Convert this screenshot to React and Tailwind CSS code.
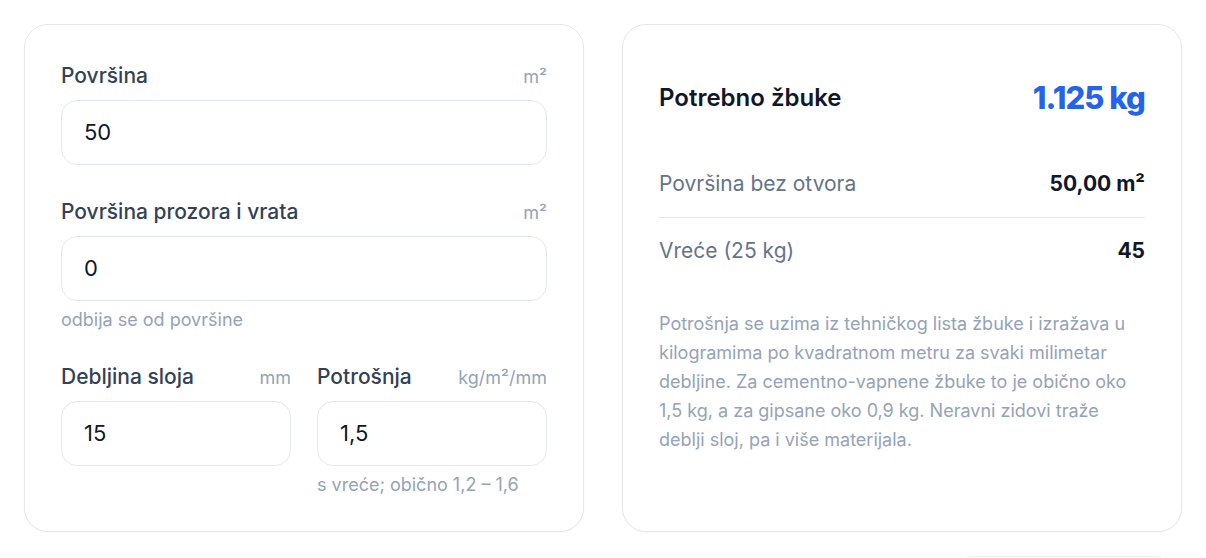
import React from 'react';

const Field = ({ label, unit, value, hint }) => (
  <div className="flex flex-col">
    <div className="flex items-baseline justify-between mb-[9px]">
      <span className="text-[21px] leading-[30px] font-medium text-[#334155]">{label}</span>
      <span className="text-[18px] text-[#94a3b8]">{unit}</span>
    </div>
    <div className="h-[65px] rounded-2xl border border-[#e2e8f0] bg-white flex items-center px-[22px] text-[22px] text-[#0f172a]">
      {value}
    </div>
    {hint && <p className="mt-[9px] text-[18px] leading-5 text-[#94a3b8]">{hint}</p>}
  </div>
);

const Row = ({ label, value, border }) => (
  <div className={`flex items-center justify-between py-[19px] ${border ? 'border-b border-[#e2e8f0]' : ''}`}>
    <span className="text-[21px] leading-7 text-[#64748b]">{label}</span>
    <span className="text-[21px] leading-7 font-bold text-[#0f172a]">{value}</span>
  </div>
);

export default function App() {
  return (
    <div className="min-h-screen bg-white px-6 pt-6 font-['Inter',sans-serif] overflow-hidden">
      <div className="grid grid-cols-2 gap-[38px]">
        {/* Inputs */}
        <div className="rounded-3xl border border-[#e5e7eb] bg-white p-9 flex flex-col gap-8 shadow-[0_1px_2px_rgba(15,23,42,0.03)]">
          <Field label="Površina" unit="m²" value="50" />
          <Field label="Površina prozora i vrata" unit="m²" value="0" hint="odbija se od površine" />
          <div className="grid grid-cols-2 gap-[26px]">
            <Field label="Debljina sloja" unit="mm" value="15" />
            <Field label="Potrošnja" unit="kg/m²/mm" value="1,5" hint="s vreće; obično 1,2 – 1,6" />
          </div>
        </div>

        {/* Result */}
        <div className="rounded-3xl border border-[#e5e7eb] bg-white p-9 flex flex-col shadow-[0_1px_2px_rgba(15,23,42,0.03)]">
          <div className="h-[74px] flex items-center justify-between">
            <span className="text-[24px] font-semibold text-[#0f172a]">Potrebno žbuke</span>
            <span className="text-[31px] font-extrabold tracking-[-0.03em] text-[#2563eb]">1.125 kg</span>
          </div>
          <div className="mt-4">
            <Row label="Površina bez otvora" value="50,00 m²" border />
            <Row label="Vreće (25 kg)" value="45" />
          </div>
          <p className="mt-[25px] text-[18px] leading-[29px] text-[#94a3b8]">
            Potrošnja se uzima iz tehničkog lista žbuke i izražava u kilogramima po kvadratnom metru za svaki milimetar debljine. Za cementno-vapnene žbuke to je obično oko 1,5 kg, a za gipsane oko 0,9 kg. Neravni zidovi traže deblji sloj, pa i više materijala.
          </p>
        </div>
      </div>
      <div className="flex justify-end mt-6 pr-[15px]">
        <div className="w-[207px] h-10 rounded-t-xl border-t border-[#eef0f3]" />
      </div>
    </div>
  );
}
